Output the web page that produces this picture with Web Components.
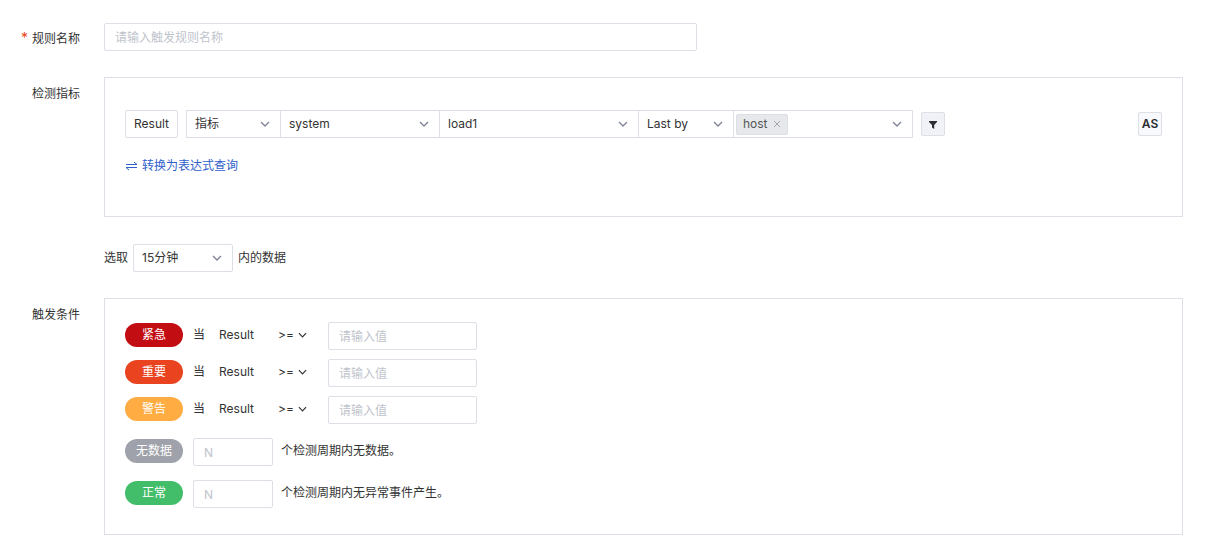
<!DOCTYPE html>
<html lang="zh-CN">
<head>
<meta charset="UTF-8">
<meta name="viewport" content="width=device-width, initial-scale=1">
<title>触发规则</title>
<style>
    body {
        --border: #dcdfe6;
        --placeholder: #c0c4cc;
        --link: #2f61cc;
        margin: 0;
        background: #fff;
        color: #333;
        font: 12px/20px Inter, "Noto Sans CJK SC", sans-serif;
    }
</style>
</head>
<body>
<rule-form></rule-form>

<script>
const CHEVRON = `
    <svg class="chevron" width="10" height="10" viewBox="0 0 10 10" fill="none" stroke="currentColor" aria-hidden="true">
        <path d="M1 3l4 4 4-4" stroke-width="1.3"/>
    </svg>`;

// label column on the left, content on the right
class FormRow extends HTMLElement {
    constructor() {
        super();
        this.attachShadow({ mode: 'open' });
    }

    connectedCallback() {
        this.shadowRoot.innerHTML = `
            <style>
                :host {
                    display: grid;
                    grid-template-columns: 80px minmax(0, 1fr);
                    column-gap: 24px;
                }
                .label {
                    height: 28px;
                    line-height: 34px;
                    text-align: right;
                }
                :host([single]) .label { line-height: 32px; }
                .content {
                    display: flex;
                    flex-direction: column;
                    gap: 27px;
                }
            </style>
            <div class="label"><slot name="label"></slot></div>
            <div class="content"><slot></slot></div>
        `;
    }
}

class FieldPanel extends HTMLElement {
    constructor() {
        super();
        this.attachShadow({ mode: 'open' });
        this.shadowRoot.innerHTML = `
            <style>
                :host {
                    display: block;
                    border: 1px solid var(--border);
                    padding: 23px 20px 26px;
                }
            </style>
            <slot></slot>
        `;
    }
}

class TextField extends HTMLElement {
    static formAssociated = true;

    constructor() {
        super();
        this.attachShadow({ mode: 'open', delegatesFocus: true });
    }

    connectedCallback() {
        const placeholder = this.getAttribute('placeholder') || '';
        const label = this.getAttribute('label') || placeholder;
        this.shadowRoot.innerHTML = `
            <style>
                :host { display: block; }
                input {
                    box-sizing: border-box;
                    display: block;
                    width: 100%;
                    height: 28px;
                    padding: 0 10px;
                    border: 1px solid var(--border);
                    border-radius: 2px;
                    background: #fff;
                    color: inherit;
                    font: inherit;
                    outline: none;
                }
                input::placeholder { color: var(--placeholder); }
                input:focus { border-color: var(--link); }
            </style>
            <input type="text" placeholder="${placeholder}" aria-label="${label}">
        `;
    }
}

class SelectField extends HTMLElement {
    constructor() {
        super();
        this.attachShadow({ mode: 'open' });
    }

    connectedCallback() {
        const options = this.getAttribute('options').split(',');
        this.shadowRoot.innerHTML = `
            <style>
                :host {
                    display: grid;
                    align-items: center;
                }
                select, .chevron { grid-area: 1 / 1; }
                select {
                    appearance: none;
                    box-sizing: border-box;
                    width: 100%;
                    height: 28px;
                    padding: 0 28px 0 8px;
                    border: 1px solid var(--border);
                    border-radius: var(--select-radius, 2px);
                    background: #fff;
                    color: inherit;
                    font: inherit;
                }
                .chevron {
                    justify-self: end;
                    margin-right: 11px;
                    color: #7d8296;
                    pointer-events: none;
                }
                :host([plain]) select {
                    height: 26px;
                    padding: 0;
                    border: 0;
                }
                :host([plain]) .chevron {
                    width: 9px;
                    margin-right: 1px;
                    color: #333;
                }
            </style>
            <select aria-label="${this.getAttribute('label')}">
                ${options.map(o => `<option>${o}</option>`).join('')}
            </select>
            ${CHEVRON}
        `;
    }
}

// multi select, the picked value is shown as a tag
class TagSelect extends HTMLElement {
    constructor() {
        super();
        this.attachShadow({ mode: 'open' });
    }

    connectedCallback() {
        this.shadowRoot.innerHTML = `
            <style>
                :host {
                    box-sizing: border-box;
                    display: flex;
                    align-items: center;
                    height: 28px;
                    padding: 0 10px 0 2px;
                    border: 1px solid var(--border);
                    background: #fff;
                }
                .tag {
                    box-sizing: border-box;
                    display: flex;
                    align-items: center;
                    gap: 5px;
                    height: 21px;
                    padding: 0 6px;
                    border: 1px solid var(--border);
                    border-radius: 2px;
                    background: #e6e8ec;
                    color: #555;
                }
                button {
                    display: flex;
                    padding: 0;
                    border: 0;
                    background: none;
                    color: #a3a6ad;
                }
                input {
                    flex: 1;
                    min-width: 0;
                    border: 0;
                    background: none;
                    font: inherit;
                    outline: none;
                }
                .chevron { color: #7d8296; }
            </style>
            <span class="tag">${this.getAttribute('value')}
                <button type="button" aria-label="移除">
                    <svg width="8" height="8" viewBox="0 0 8 8" stroke="currentColor" aria-hidden="true">
                        <path d="M1 1l6 6M7 1L1 7"/>
                    </svg>
                </button>
            </span>
            <input type="text" aria-label="${this.getAttribute('label')}">
            ${CHEVRON}
        `;
        this.shadowRoot.querySelector('button').addEventListener('click', () => {
            this.shadowRoot.querySelector('.tag').remove();
        });
    }
}

class IconButton extends HTMLElement {
    constructor() {
        super();
        this.attachShadow({ mode: 'open' });
    }

    connectedCallback() {
        this.shadowRoot.innerHTML = `
            <style>
                :host { display: block; }
                button {
                    display: flex;
                    align-items: center;
                    justify-content: center;
                    width: 24px;
                    height: 24px;
                    padding: 0;
                    border: 1px solid var(--border);
                    border-radius: 2px;
                    background: var(--button-bg, #f8f9fc);
                    color: #2b2d33;
                    font: inherit;
                    font-weight: 600;
                }
            </style>
            <button type="button" aria-label="${this.getAttribute('label')}"><slot></slot></button>
        `;
    }
}

class LevelPill extends HTMLElement {
    static colors = {
        critical: '#c20d12',
        error: '#ea4320',
        warning: '#ffac42',
        nodata: '#9fa2aa',
        ok: '#42bd6a'
    };

    constructor() {
        super();
        this.attachShadow({ mode: 'open' });
    }

    connectedCallback() {
        const color = LevelPill.colors[this.getAttribute('level')];
        this.shadowRoot.innerHTML = `
            <style>
                :host {
                    display: block;
                    width: 58px;
                    margin-top: 1px;
                    border-radius: 12px;
                    background: ${color};
                    color: #fff;
                    line-height: 24px;
                    text-align: center;
                }
            </style>
            <slot></slot>
        `;
    }
}

class ConditionRow extends HTMLElement {
    constructor() {
        super();
        this.attachShadow({ mode: 'open' });
    }

    connectedCallback() {
        const level = this.getAttribute('level');
        const name = this.getAttribute('name');
        this.shadowRoot.innerHTML = `
            <style>
                :host {
                    display: flex;
                    align-items: flex-start;
                    line-height: 26px;
                }
                level-pill { margin-right: 10px; }
                .when { width: 26px; }
                .metric { width: 59px; }
                select-field {
                    width: 30px;
                    margin-right: 20px;
                }
                .value { width: 149px; }
                .count {
                    width: 80px;
                    margin-right: 8px;
                }
            </style>
            <level-pill level="${level}">${name}</level-pill>
            ${this.hasAttribute('periods') ? `
                <text-field class="count" placeholder="N" label="${name}周期数"></text-field>
                <span><slot></slot></span>
            ` : `
                <span class="when">当</span>
                <span class="metric">Result</span>
                <select-field plain label="${name}比较" options="&gt;=,&gt;,&lt;=,&lt;,="></select-field>
                <text-field class="value" placeholder="请输入值" label="${name}阈值"></text-field>
            `}
        `;
    }
}

class RuleForm extends HTMLElement {
    constructor() {
        super();
        this.attachShadow({ mode: 'open' });
    }

    connectedCallback() {
        this.shadowRoot.innerHTML = `
            <style>
                :host { display: block; }
                form {
                    display: flex;
                    flex-direction: column;
                    gap: 26px;
                    padding: 23px 22px 15px 0;
                }
                .required::before {
                    content: "*";
                    margin-right: 4px;
                    color: #ea4320;
                    font-size: 14px;
                    line-height: 1;
                }
                .name { width: 55%; }
                .query {
                    padding-top: 32px;
                    padding-bottom: 40px;
                }
                .query-line {
                    display: flex;
                    align-items: center;
                    gap: 8px;
                }
                .result {
                    padding: 3px 8px;
                    border: 1px solid var(--border);
                    border-radius: 2px;
                }
                .group {
                    display: flex;
                    --select-radius: 0;
                }
                .group > * + * { margin-left: -1px; }
                .kind { width: 95px; }
                .measurement { width: 160px; }
                .metric { width: 200px; }
                .aggregate { width: 96px; }
                .by { width: 180px; }
                .filter { --button-bg: #f1f1f8; }
                .alias { margin-left: auto; }
                .convert {
                    display: flex;
                    align-items: center;
                    gap: 4px;
                    width: fit-content;
                    margin-top: 18px;
                    color: var(--link);
                    text-decoration: none;
                }
                .range {
                    display: flex;
                    align-items: center;
                    gap: 5px;
                }
                .range select-field { width: 100px; }
                .conditions {
                    display: flex;
                    flex-direction: column;
                    gap: 14px;
                }
                .thresholds {
                    display: flex;
                    flex-direction: column;
                    gap: 9px;
                }
            </style>
            <form>
                <form-row single>
                    <label slot="label" class="required" for="rule-name">规则名称</label>
                    <text-field class="name" id="rule-name" label="规则名称" placeholder="请输入触发规则名称"></text-field>
                </form-row>
                <form-row>
                    <span slot="label">检测指标</span>
                    <field-panel class="query">
                        <div class="query-line">
                            <span class="result">Result</span>
                            <div class="group">
                                <select-field class="kind" label="类型" options="指标"></select-field>
                                <select-field class="measurement" label="指标集" options="system"></select-field>
                                <select-field class="metric" label="指标" options="load1,load5,load15"></select-field>
                                <select-field class="aggregate" label="聚合" options="Last by,Avg by,Max by"></select-field>
                                <tag-select class="by" label="分组" value="host"></tag-select>
                            </div>
                            <icon-button class="filter" label="筛选">
                                <svg width="10" height="10" viewBox="0 0 10 10" fill="currentColor" aria-hidden="true">
                                    <path d="M1 2h8v1L6.2 6v4L4 8.6V6L1 3z"/>
                                </svg>
                            </icon-button>
                            <icon-button class="alias" label="AS">AS</icon-button>
                        </div>
                        <a class="convert" href="#">
                            <svg width="13" height="10" viewBox="0 0 13 10" fill="none" stroke="currentColor" aria-hidden="true">
                                <path d="M1 3.5h11L9 1M12 6.5H1L4 9"/>
                            </svg>
                            转换为表达式查询
                        </a>
                    </field-panel>
                    <div class="range">
                        <span>选取</span>
                        <select-field label="时间范围" options="15分钟,30分钟,1小时"></select-field>
                        <span>内的数据</span>
                    </div>
                </form-row>
                <form-row>
                    <span slot="label">触发条件</span>
                    <field-panel>
                        <div class="conditions">
                            <div class="thresholds">
                                <condition-row level="critical" name="紧急"></condition-row>
                                <condition-row level="error" name="重要"></condition-row>
                                <condition-row level="warning" name="警告"></condition-row>
                            </div>
                            <condition-row level="nodata" name="无数据" periods>个检测周期内无数据。</condition-row>
                            <condition-row level="ok" name="正常" periods>个检测周期内无异常事件产生。</condition-row>
                        </div>
                    </field-panel>
                </form-row>
            </form>
        `;
    }
}

customElements.define('form-row', FormRow);
customElements.define('field-panel', FieldPanel);
customElements.define('text-field', TextField);
customElements.define('select-field', SelectField);
customElements.define('tag-select', TagSelect);
customElements.define('icon-button', IconButton);
customElements.define('level-pill', LevelPill);
customElements.define('condition-row', ConditionRow);
customElements.define('rule-form', RuleForm);
</script>
</body>
</html>
